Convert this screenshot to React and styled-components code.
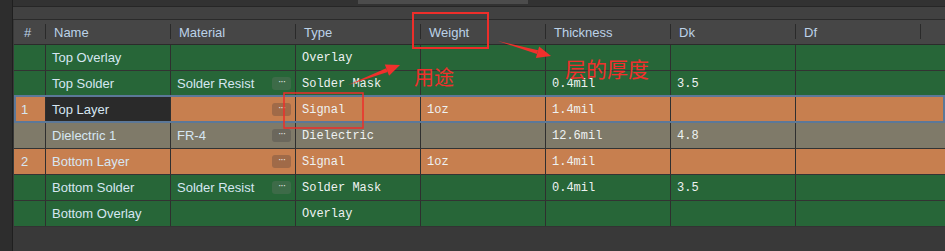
import React from 'react'
import styled, { createGlobalStyle } from 'styled-components'

const GlobalStyle = createGlobalStyle`
	html, body {
		margin: 0;
		padding: 0;
		background: #2c2c2c;
		overflow: hidden;
	}
`

const COLS = '32px repeat(7, 125px) 1fr'

const rowColors = {
	green: '#276638',
	copper: '#c77f4f',
	core: '#7f7a69'
}

const btnColors = {
	green: '#3d6b48',
	copper: '#a06a48',
	core: '#6b675c'
}

const Screen = styled.div`
	position: relative;
	display: flex;
	width: 945px;
	height: 251px;
	overflow: hidden;
	font-family: 'Liberation Sans', Arial, sans-serif;
`

const Gutter = styled.div`
	width: 12px;
	background: #2d2d2d;
	border-right: 1px solid #1f1f1f;
`

const Panel = styled.div`
	flex: 1;
	display: flex;
	flex-direction: column;
	background: #393939;
	min-width: 0;
`

const ScrollTrack = styled.div`
	height: 6px;
	background: #323232;
	border-bottom: 1px solid #262626;
	display: flex;
`

const ScrollThumb = styled.div`
	margin-left: 345px;
	width: 170px;
	height: 4px;
	background: #4c4c4c;
`

const Toolbar = styled.div`
	height: 12px;
	background: #414141;
	border-bottom: 1px solid #2a2a2a;
`

const Table = styled.div`
	display: flex;
	flex-direction: column;
	padding-left: 1px;
`

const HeaderRow = styled.div`
	display: grid;
	grid-template-columns: ${COLS};
	height: 24px;
	background: #464646;
	border-bottom: 1px solid #2b2b2b;
`

const HeadCell = styled.div`
	position: relative;
	display: flex;
	align-items: center;
	padding-left: ${p => (p.$first ? '10px' : '8px')};
	font-size: 13px;
	color: #bcd2e8;
	&::after {
		content: '';
		display: ${p => (p.$noSep ? 'none' : 'block')};
		position: absolute;
		right: 0;
		top: 4px;
		bottom: 5px;
		width: 1px;
		background: #2a2a2a;
	}
`

const Row = styled.div`
	position: relative;
	display: grid;
	grid-template-columns: ${COLS};
	height: 25px;
	border-bottom: 1px solid #333;
	background: ${p => rowColors[p.$kind]};
	${p =>
		p.$selected &&
		`
		&::after {
			content: '';
			position: absolute;
			left: 0;
			right: 0;
			top: -2px;
			bottom: -1px;
			border: 2px solid #5c7898;
			pointer-events: none;
		}
	`}
`

const Cell = styled.div`
	display: flex;
	align-items: center;
	justify-content: space-between;
	padding-left: 6px;
	padding-right: 4px;
	border-right: 1px solid ${p => (p.$last ? 'transparent' : '#2f2f2f')};
	background: ${p => (p.$editing ? '#2a2a2a' : 'transparent')};
	color: #d6e6f2;
	font-size: 13px;
	white-space: nowrap;
	overflow: hidden;
`

const MonoCell = styled(Cell)`
	font-family: 'Liberation Mono', 'Courier New', monospace;
	font-size: 12px;
	color: #eef2f2;
`

const IndexCell = styled(Cell)`
	padding-left: 7px;
`

const DotsButton = styled.div`
	width: 19px;
	height: 13px;
	border-radius: 3px;
	background: ${p => btnColors[p.$kind]};
	color: #e8e8e8;
	font-size: 10px;
	line-height: 9px;
	text-align: center;
	letter-spacing: -1px;
`

const Note = styled.div`
	position: absolute;
	left: ${p => p.$x}px;
	top: ${p => p.$y}px;
	font-family: 'Noto Sans CJK SC', sans-serif;
	font-size: ${p => p.$size}px;
	color: #f0302c;
	line-height: 1;
	pointer-events: none;
`

const Overlay = styled.svg`
	position: absolute;
	left: 0;
	top: 0;
	pointer-events: none;
`

const headers = ['#', 'Name', 'Material', 'Type', 'Weight', 'Thickness', 'Dk', 'Df', '']

const layers = [
	{ kind: 'green', name: 'Top Overlay', type: 'Overlay' },
	{ kind: 'green', name: 'Top Solder', material: 'Solder Resist', dots: true, type: 'Solder Mask', thickness: '0.4mil', dk: '3.5' },
	{ kind: 'copper', idx: '1', name: 'Top Layer', dots: true, type: 'Signal', weight: '1oz', thickness: '1.4mil', selected: true },
	{ kind: 'core', name: 'Dielectric 1', material: 'FR-4', dots: true, type: 'Dielectric', thickness: '12.6mil', dk: '4.8' },
	{ kind: 'copper', idx: '2', name: 'Bottom Layer', dots: true, type: 'Signal', weight: '1oz', thickness: '1.4mil' },
	{ kind: 'green', name: 'Bottom Solder', material: 'Solder Resist', dots: true, type: 'Solder Mask', thickness: '0.4mil', dk: '3.5' },
	{ kind: 'green', name: 'Bottom Overlay', type: 'Overlay' }
]

const Arrow = ({ x1, y1, x2, y2 }) => {
	const a = Math.atan2(y2 - y1, x2 - x1)
	const len = 14
	const w = 6
	const bx = x2 - len * Math.cos(a)
	const by = y2 - len * Math.sin(a)
	const px = -Math.sin(a)
	const py = Math.cos(a)
	const head = `${x2},${y2} ${bx + px * w},${by + py * w} ${bx - px * w},${by - py * w}`
	return (
		<g fill='#f0302c' stroke='none'>
			<polygon
				points={`${x1},${y1} ${bx + px * 2},${by + py * 2} ${bx - px * 2},${by - py * 2}`}
			/>
			<polygon points={head} />
		</g>
	)
}

export default function App() {
	return (
		<Screen>
			<GlobalStyle />
			<Gutter />
			<Panel>
				<ScrollTrack>
					<ScrollThumb />
				</ScrollTrack>
				<Toolbar />
				<Table>
					<HeaderRow>
						{headers.map((h, i) => (
							<HeadCell key={i} $first={i === 0} $noSep={i === 8}>
								{h}
							</HeadCell>
						))}
					</HeaderRow>
					{layers.map((l, i) => (
						<Row key={i} $kind={l.kind} $selected={l.selected}>
							<IndexCell>{l.idx}</IndexCell>
							<Cell $editing={l.selected}>{l.name}</Cell>
							<Cell>
								<span>{l.material}</span>
								{l.dots && <DotsButton $kind={l.kind}>···</DotsButton>}
							</Cell>
							<MonoCell>{l.type}</MonoCell>
							<MonoCell>{l.weight}</MonoCell>
							<MonoCell>{l.thickness}</MonoCell>
							<MonoCell>{l.dk}</MonoCell>
							<Cell $last />
							<Cell $last />
						</Row>
					))}
				</Table>
			</Panel>
			<Overlay width='945' height='251'>
				<rect x='413' y='13' width='75' height='35' fill='none' stroke='#ee2e2a' strokeWidth='2' />
				<rect x='284' y='93' width='79' height='35' fill='none' stroke='#ee2e2a' strokeWidth='1.5' />
				<Arrow x1={348} y1={85} x2={400} y2={65} />
				<Arrow x1={498} y1={41} x2={551} y2={56} />
			</Overlay>
			<Note $x={414} $y={67} $size={20}>用途</Note>
			<Note $x={565} $y={58} $size={21}>层的厚度</Note>
		</Screen>
	)
}
